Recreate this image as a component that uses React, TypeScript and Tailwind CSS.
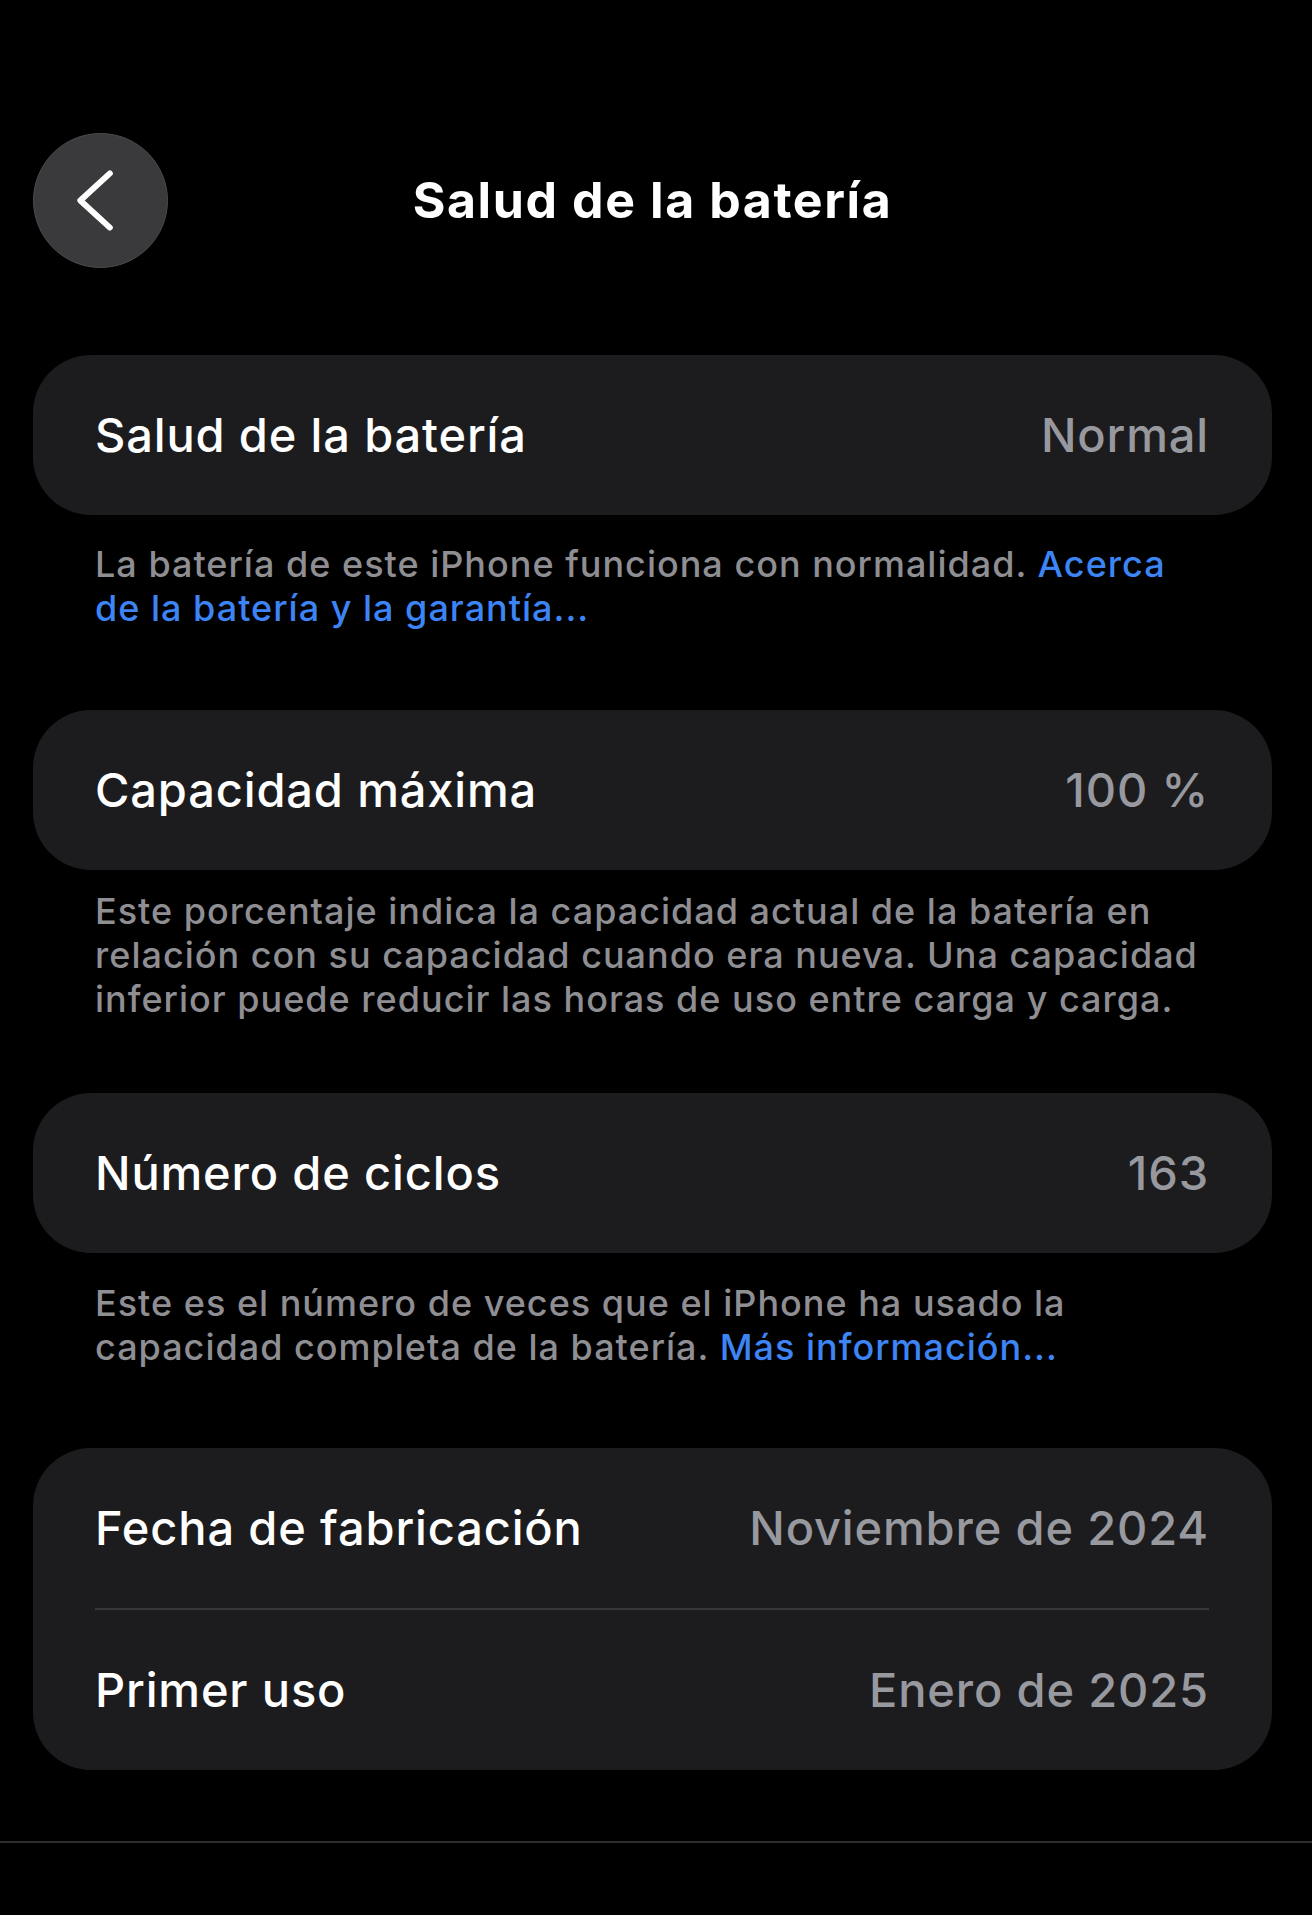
import React from "react";

// Battery health settings screen (iOS dark style)

type Row = { label: string; value: string };

const font = { fontFamily: "Inter, 'Noto Sans', sans-serif" };

const Card = ({ rows, className = "" }: { rows: Row[]; className?: string }) => (
  <div className={`ml-[33px] mr-[40px] rounded-[58px] bg-[#1c1c1e] pl-[62px] pr-[63px] ${className}`}>
    {rows.map((row, i) => (
      <div key={row.label}>
        {i > 0 && <div className="h-[2px] bg-[#38383a]" />}
        <div className="flex h-[160px] items-center justify-between text-[47px] font-medium tracking-[0.85px]">
          <span className="text-white">{row.label}</span>
          <span className="text-[#98989f]">{row.value}</span>
        </div>
      </div>
    ))}
  </div>
);

const Footnote = ({ children, className = "" }: { children: React.ReactNode; className?: string }) => (
  <p
    className={`pl-[95px] pr-[40px] text-[36px] font-medium leading-[44px] tracking-[1px] text-[#8e8e93] ${className}`}
  >
    {children}
  </p>
);

const Link = ({ children }: { children: React.ReactNode }) => (
  <span className="text-[#3d84f5]">{children}</span>
);

const App = () => {
  return (
    <div className="min-h-[1915px] w-full overflow-hidden bg-black pt-[133px]" style={font}>
      {/* header */}
      <div className="grid grid-cols-[135px_1fr_135px] items-center pl-[33px] pr-[40px]">
        <button className="flex h-[135px] w-[135px] items-center justify-center rounded-full border border-[#4a4a4d] bg-[#3a3a3c]">
          <svg width="135" height="135" viewBox="0 0 135 135" fill="none">
            <polyline
              points="77,40 47,67.5 77,95"
              stroke="white"
              strokeWidth="6"
              strokeLinecap="round"
              strokeLinejoin="round"
            />
          </svg>
        </button>
        <h1 className="text-center text-[50px] font-bold tracking-[1.6px] text-white">Salud de la batería</h1>
        <div />
      </div>

      <Card className="mt-[87px]" rows={[{ label: "Salud de la batería", value: "Normal" }]} />
      <Footnote className="mt-[27px]">
        La batería de este iPhone funciona con normalidad. <Link>Acerca</Link>
        <br />
        <Link>de la batería y la garantía...</Link>
      </Footnote>

      <Card className="mt-[80px]" rows={[{ label: "Capacidad máxima", value: "100 %" }]} />
      <Footnote className="mt-[19px]">
        Este porcentaje indica la capacidad actual de la batería en
        <br />
        relación con su capacidad cuando era nueva. Una capacidad
        <br />
        inferior puede reducir las horas de uso entre carga y carga.
      </Footnote>

      <Card className="mt-[72px]" rows={[{ label: "Número de ciclos", value: "163" }]} />
      <Footnote className="mt-[28px]">
        Este es el número de veces que el iPhone ha usado la
        <br />
        capacidad completa de la batería. <Link>Más información...</Link>
      </Footnote>

      <Card
        className="mt-[79px]"
        rows={[
          { label: "Fecha de fabricación", value: "Noviembre de 2024" },
          { label: "Primer uso", value: "Enero de 2025" },
        ]}
      />

      <div className="mt-[71px] h-[2px] w-full bg-[#2e2e30]" />
    </div>
  );
};

export default App;
